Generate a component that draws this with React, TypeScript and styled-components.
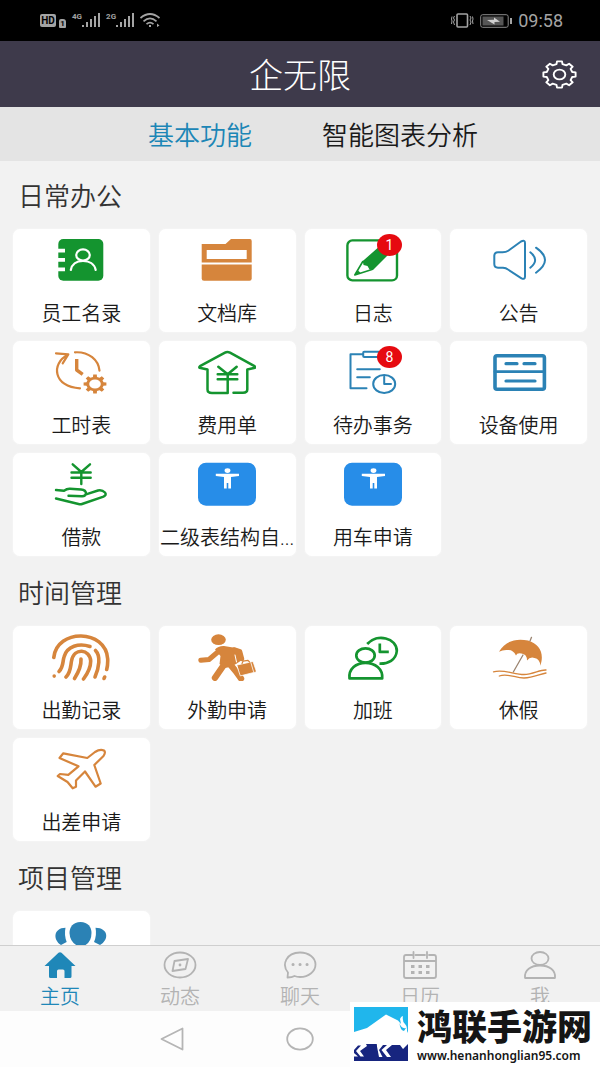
import React, { useState } from "react";
import styled, { createGlobalStyle } from "styled-components";

const GREEN = "#14942f";
const ORANGE = "#d6853c";
const BLUE = "#2b82b5";
const TILE_BLUE = "#278de8";

const GlobalStyle = createGlobalStyle`
  *, *::before, *::after { box-sizing: border-box; }
  body {
    margin: 0;
    background: #f2f2f2;
    font-family: Roboto, "Noto Sans CJK SC", sans-serif;
  }
  button {
    margin: 0;
    padding: 0;
    border: 0;
    background: none;
    color: inherit;
    font-family: inherit;
    cursor: pointer;
  }
  svg { display: block; }
`;

const Page = styled.div`
  position: relative;
  display: flex;
  flex-direction: column;
  height: 100vh;
  overflow: hidden;
`;

const StatusBar = styled.div`
  display: flex;
  flex: none;
  justify-content: space-between;
  align-items: center;
  height: 41px;
  padding: 0 37px 0 40px;
  background: #000;
  color: #a4a4a4;
`;

const StatusGroup = styled.div`
  display: flex;
  align-items: center;
  gap: 6px;
`;

const HdTag = styled.span`
  width: 16px;
  border-radius: 2px;
  background: #a4a4a4;
  color: #000;
  font-size: 10px;
  font-weight: 700;
  line-height: 13px;
  text-align: center;
`;

const SimTag = styled.span`
  align-self: flex-end;
  width: 7px;
  margin-left: -3px;
  border-radius: 2px 3px 1px 1px;
  background: #a4a4a4;
  color: #000;
  font-size: 8px;
  font-weight: 700;
  line-height: 9px;
  text-align: center;
`;

const Signal = styled.span`
  display: flex;
  align-items: flex-start;
  font-size: 8px;
  font-weight: 700;
  line-height: 8px;
`;

const Clock = styled.span`
  font-size: 18px;
  line-height: 20px;
`;

const Header = styled.header`
  display: grid;
  flex: none;
  grid-template-columns: 1fr auto 1fr;
  align-items: center;
  height: 66px;
  padding: 0 23px;
  background: #3e3a4b;
  color: #fff;
`;

const Title = styled.h1`
  grid-column: 2;
  margin: 0;
  padding-top: 4px;
  font-size: 34px;
  font-weight: 300;
  line-height: 40px;
`;

const SettingsButton = styled.button`
  justify-self: end;
`;

const Tabs = styled.nav`
  display: flex;
  flex: none;
  justify-content: center;
  height: 54px;
  background: #e4e4e4;
`;

const Tab = styled.button<{ $active: boolean }>`
  width: 33.333%;
  padding-top: 4px;
  color: ${(p) => (p.$active ? "#1c86b6" : "#1a1a1a")};
  font-size: 26px;
  font-weight: 350;
  line-height: 32px;
  white-space: nowrap;
`;

const Content = styled.main`
  flex: 1;
  min-height: 0;
  padding: 0 13px;
  overflow-y: auto;
  scrollbar-width: none;
`;

const Section = styled.section`
  padding-top: 19px;

  & + & { padding-top: 21px; }
`;

const SectionTitle = styled.h2`
  margin: 0;
  padding: 0 5px 15px;
  color: #333;
  font-size: 26px;
  font-weight: 350;
  line-height: 34px;
`;

const CardGrid = styled.div`
  display: grid;
  grid-template-columns: repeat(4, minmax(0, 1fr));
  gap: 9px;
`;

const Card = styled.button`
  display: flex;
  flex-direction: column;
  align-items: center;
  gap: 17px;
  height: 103px;
  padding-top: 7px;
  border-radius: 7px;
  background: #fff;
  box-shadow: 0 0 2px #fafafa;
`;

const IconBox = styled.span`
  position: relative;
  width: 58px;
  height: 48px;
`;

const Badge = styled.span`
  position: absolute;
  top: -2px;
  left: 33px;
  width: 25px;
  height: 22px;
  border-radius: 50%;
  background: #e60a10;
  color: #fff;
  font-size: 14px;
  line-height: 22px;
  text-align: center;
`;

const CardLabel = styled.span`
  color: #1a1a1a;
  font-size: 20px;
  font-weight: 350;
  line-height: 26px;
  white-space: nowrap;
`;

const BottomNav = styled.nav`
  display: flex;
  flex: none;
  height: 66px;
  border-top: 1px solid #cfcfcf;
  background: #f1f1f1;
`;

const NavItem = styled.button<{ $active: boolean }>`
  display: flex;
  flex: 1;
  flex-direction: column;
  align-items: center;
  gap: 6px;
  padding-top: 5px;
  color: ${(p) => (p.$active ? "#1f87b8" : "#b3b3b3")};
  font-size: 20px;
  font-weight: 350;
  line-height: 24px;
`;

const SystemNav = styled.div`
  display: grid;
  flex: none;
  grid-template-columns: repeat(3, 128px);
  justify-content: center;
  height: 56px;
  background: #fdfdfd;
`;

const SystemButton = styled.button`
  display: grid;
  place-items: center;
`;

const SiteMark = styled.a`
  position: absolute;
  right: 0;
  bottom: 0;
  display: flex;
  gap: 9px;
  width: 250px;
  height: 65px;
  padding: 5px 4px;
  background: #fff;
  color: #151515;
  text-decoration: none;
`;

const SiteText = styled.span`
  display: flex;
  flex-direction: column;
  padding-top: 2px;
`;

const SiteName = styled.strong`
  font-size: 35px;
  font-weight: 900;
  line-height: 40px;
  white-space: nowrap;
`;

const SiteUrl = styled.span`
  font-family: "Noto Sans", sans-serif;
  font-size: 12px;
  font-weight: 600;
  line-height: 14px;
`;

function gearPath(cx: number, cy: number, rx: number, ry: number, teeth: number, depth: number) {
  const points: string[] = [];
  const step = (Math.PI * 2) / teeth;
  for (let i = 0; i < teeth; i++) {
    const a = i * step - Math.PI / 2;
    const spots: [number, number][] = [
      [-0.3, depth],
      [-0.2, 1],
      [0.2, 1],
      [0.3, depth],
    ];
    spots.forEach(([offset, scale]) => {
      const t = a + offset * step;
      points.push(`${(cx + Math.cos(t) * rx * scale).toFixed(1)} ${(cy + Math.sin(t) * ry * scale).toFixed(1)}`);
    });
  }
  return `M${points.join("L")}Z`;
}

function Drawing({ color, width = 2.4, children }: { color: string; width?: number; children: React.ReactNode }) {
  return (
    <svg
      width="58"
      height="48"
      viewBox="0 0 58 48"
      fill="none"
      stroke={color}
      strokeWidth={width}
      strokeLinecap="round"
      strokeLinejoin="round"
      aria-hidden="true"
    >
      {children}
    </svg>
  );
}

const PersonTile = () => (
  <Drawing color="none">
    <rect x="0" y="2.7" width="58" height="43" rx="8" fill={TILE_BLUE} />
    <ellipse cx="29.5" cy="10.6" rx="2.9" ry="2.3" fill="#fff" />
    <path d="M17.8 13.8H41V15.9L33 17V28.5H30.3V23H28.7V28.5H26V17L17.8 15.9Z" fill="#fff" />
  </Drawing>
);

const icons: Record<string, React.ReactNode> = {
  contacts: (
    <Drawing color="#fff" width={2.2}>
      <rect x="6.3" y="3" width="45" height="41.7" rx="5" fill={GREEN} stroke="none" />
      <path d="M5 12.8H13V16.4H5ZM5 22H13V25.8H5ZM5 31.6H13V35.3H5Z" fill="#fff" stroke="none" />
      <ellipse cx="31" cy="19" rx="6.8" ry="5.6" />
      <path d="M18.8 34C20 28 25 25 31 25S42.5 28 43.7 34" />
    </Drawing>
  ),
  folder: (
    <Drawing color="none">
      <path d="M3.7 8H27.5L33 3H52Q53.7 3 53.7 5V26.4H3.7Z" fill={ORANGE} />
      <path d="M3.7 28.4H53.7V42.5Q53.7 44.7 51.5 44.7H6Q3.7 44.7 3.7 42.5Z" fill={ORANGE} />
      <path d="M8.7 14H48.7V23H8.7Z" fill="#fff" />
    </Drawing>
  ),
  diary: (
    <Drawing color={GREEN}>
      <rect x="3.4" y="4.4" width="49.6" height="40" rx="5" />
      <path d="M18.8 25L37 9L47 16L29 34L25.5 33.5L23.5 30L19.5 29Z" fill={GREEN} stroke="none" />
      <path d="M18.8 25.5L10.8 39L28 33.5" strokeWidth="1.6" />
      <path d="M10.8 39L14 34.5L16.5 36.8Z" fill={GREEN} stroke="none" />
    </Drawing>
  ),
  speaker: (
    <Drawing color={BLUE} width={2}>
      <path d="M4.3 20Q4.3 16.3 8 16.3H12.5Q16 16.3 18.3 14.7L31 5.5Q35 3.5 35 7V40.5Q35 44 31.5 42.3L18 33.5Q16 32 13 31.800H8Q4.3 31.5 4.3 28Z" />
      <path d="M40.3 16.3Q50 24 40.3 31.7M46 11.7Q64 24 46 36.7" />
    </Drawing>
  ),
  timesheet: (
    <Drawing color={ORANGE} width={2.2}>
      <path d="M4 5.3L16.3 6.3L10.7 15.3M15.7 7C-1 15 1 39 28 40.3M23 4.3C37 3.5 46.5 12 47.5 22.7" />
      <path d="M24.7 11V22L30.7 26.3" strokeWidth="3.4" strokeLinecap="butt" />
      <path d={gearPath(43, 36, 11.5, 9.5, 8, 0.76)} fill={ORANGE} stroke="none" />
      <ellipse cx="43" cy="36" rx="5.8" ry="4.6" fill="#fff" stroke="none" />
    </Drawing>
  ),
  expense: (
    <Drawing color={GREEN} width={2.5}>
      <path d="M29.7 26.3V45H14Q9.5 45 9.5 41.5V21.5L1.5 19.8Q1 19 2 18.2L27 4.7Q29.3 3.5 32 4.7L56.500 18.2Q57.5 19 57 19.8L49.3 21.5V41.5Q49.3 44.7 45 44.7H35.5" />
      <path d="M20.3 18.7L29.7 26.3L38.7 18.7M19.7 26.3H39.3M19.7 31.3H39.3" />
    </Drawing>
  ),
  todo: (
    <Drawing color={BLUE} width={2}>
      <path d="M19 6.3H6.5V40.3H22.5" />
      <rect x="19.2" y="3.7" width="17" height="5.3" rx="1" />
      <path d="M13.2 21.3H35.8M13.2 29.3H25.8" />
      <ellipse cx="40.2" cy="36" rx="11" ry="9" />
      <path d="M40.2 28.8V36H47" />
    </Drawing>
  ),
  device: (
    <Drawing color={BLUE} width={3.6}>
      <rect x="5" y="7.8" width="49.4" height="33.4" rx="2" />
      <path d="M5 23.7H54" strokeWidth="2.8" />
      <path d="M16 15.7H27M34 15.7H45M16 33H45" strokeWidth="3.2" />
    </Drawing>
  ),
  loan: (
    <Drawing color={GREEN}>
      <path d="M20.7 4.3L29.3 12L38 4.3M29.3 12V24M19.5 12.5H38.7M19.5 17.7H38.7" />
      <path d="M4 30L12 30.8Q15 28.5 18 28.7L29 29.5Q34 30 34 33.5Q33.5 36.3 30 36.2L16.5 35.7M34 34.3L46 30.5Q50 29.5 53 32.5Q55 35 51.5 36.6L30 44Q28.5 44.5 26.5 44L4 38.5" />
    </Drawing>
  ),
  tile: <PersonTile />,
  fingerprint: (
    <Drawing color={ORANGE} width={3.6}>
      <path d="M1.800 24.5C4.5 -4.5 54 -4.5 55.7 26Q55.9 32 54.7 36.5" />
      <path d="M7 38.5C11.5 34 10.5 29 12 24C15 13 27 10 38 13.5" />
      <path d="M43.5 17.5C49 23 47 35 43 44" />
      <path d="M14 44C19 39 18.5 33 19.5 28C22 14 38 16 38.7 28C38.7 35 36 40 31.5 46" />
      <path d="M29 26C29.5 34 26 40 22.5 45.5M2.2 43V43.1M52.7 44L52 45.5" />
    </Drawing>
  ),
  runner: (
    <Drawing color={ORANGE} width={5}>
      <ellipse cx="20.5" cy="6.7" rx="7.3" ry="5.4" fill={ORANGE} stroke="none" />
      <path d="M2.8 27.3L11 26.5L21 18" />
      <path d="M17 16.5Q20 12.800 26 13L38 15L43.5 18L45.5 26L38 31L32 34L27 35L21.500 31L22.5 23Z" fill={ORANGE} stroke="none" />
      <path d="M36 16.5L42 18.5L44 26" strokeWidth="4.600" />
      <path d="M26.500 31L17 44.8M31 30L38 38.5L43 45.5" strokeWidth="6.400" />
      <path d="M37 22L38.500 29" stroke="#fff" strokeWidth="1" />
      <path d="M39 32L55 28.500L58.500 38.800L42.700 42.800Z" fill={ORANGE} stroke="#fff" strokeWidth=".8" />
      <path d="M44 30.500L45 28.200L50 27.300L51.500 29" strokeWidth="1.200" />
      <path d="M53 30L55.500 38.500" stroke="#fff" strokeWidth=".8" />
    </Drawing>
  ),
  overtime: (
    <Drawing color={GREEN} width={2.7}>
      <path d="M23.2 11C33 0 53 5 52.8 18C52 27 44 31 35.500 30.7" strokeLinecap="butt" />
      <path d="M35.800 10.5V18.9H44.800" strokeLinecap="butt" />
      <ellipse cx="21.5" cy="22.500" rx="9.200" ry="7.200" />
      <path d="M5.500 45.300C4.500 36 12 29.800 21.500 29.800S39 36 38.200 45.300Z" />
    </Drawing>
  ),
  umbrella: (
    <Drawing color={ORANGE} width={1.3}>
      <path d="M9 18.700C15 8 26 5 38 7.500C50 11 54.500 21 50.300 32.700Q50 26 44.500 25Q40 23.500 37 27.500Q37 21 31.500 20.500Q27 19.500 26 22.500Q23 16.500 18 17Q13 16.500 9 18.700Z" fill={ORANGE} stroke="none" />
      <path d="M41.500 4.300L40 8M33 22L23.300 39" stroke="#9b8470" />
      <path d="M3.500 38.800C14 36 24 41.500 34 41.500C43 41.500 50 36.500 56 37M9.300 43C18 40 25 45 34 45C43 45 50 41 56 40" />
    </Drawing>
  ),
  plane: (
    <Drawing color={ORANGE} width={2.2}>
      <path d="M7.500 13L11.300 8.300L35.300 13L43 7Q48 3.800 52 5.500Q54 7 51.500 11L42.300 20L48.700 38.500L43.500 41.700L33 26.500L24 35.500V41.700L20.700 43.300L15.500 37L5.700 31L8 29L16.300 29.800L26.500 21.300Z" />
    </Drawing>
  ),
  people: (
    <Drawing color="none">
      <path d="M28.500 4C36 4 39.500 9 39.500 15Q39.500 26 29 29Q18 26 17.500 15C17.500 9 21 4 28.500 4Z" fill={BLUE} />
      <path d="M13.500 9.700C1 10 1 22 9 27L14.700 24Q12 17 13.500 9.700Z" fill={BLUE} />
      <path d="M43.500 9.700C57 10 57 22 48 27L42 24Q45 17 43.500 9.700Z" fill={BLUE} />
    </Drawing>
  ),
};

interface Entry {
  icon: string;
  label?: string;
  badge?: number;
}

const sections: { title: string; entries: Entry[] }[] = [
  {
    title: "日常办公",
    entries: [
      { icon: "contacts", label: "员工名录" },
      { icon: "folder", label: "文档库" },
      { icon: "diary", label: "日志", badge: 1 },
      { icon: "speaker", label: "公告" },
      { icon: "timesheet", label: "工时表" },
      { icon: "expense", label: "费用单" },
      { icon: "todo", label: "待办事务", badge: 8 },
      { icon: "device", label: "设备使用" },
      { icon: "loan", label: "借款" },
      { icon: "tile", label: "二级表结构自..." },
      { icon: "tile", label: "用车申请" },
    ],
  },
  {
    title: "时间管理",
    entries: [
      { icon: "fingerprint", label: "出勤记录" },
      { icon: "runner", label: "外勤申请" },
      { icon: "overtime", label: "加班" },
      { icon: "umbrella", label: "休假" },
      { icon: "plane", label: "出差申请" },
    ],
  },
  { title: "项目管理", entries: [{ icon: "people" }] },
];

function NavIcon({ children }: { children: React.ReactNode }) {
  return (
    <svg width="34" height="28" viewBox="0 0 34 28" fill="none" stroke="currentColor" strokeWidth="1.8" strokeLinejoin="round" strokeLinecap="round" aria-hidden="true">
      {children}
    </svg>
  );
}

const navItems = [
  {
    label: "主页",
    icon: (
      <path d="M1.500 15L15.500 1.700Q17 .7 18.500 1.700L32.500 15H28.500V25.500Q28.500 27 27 27H21.500V20Q21.500 18.500 20 18.500H15.500Q14 18.500 14 20V27H7.500Q6 27 6 25.500V15Z" fill="currentColor" stroke="none" />
    ),
  },
  {
    label: "动态",
    icon: (
      <>
        <ellipse cx="17" cy="14" rx="15.500" ry="12.500" />
        <path d="M11.500 10L25 8L22.500 18L9.500 20Z" />
        <circle cx="17" cy="14" r="1.400" fill="currentColor" stroke="none" />
      </>
    ),
  },
  {
    label: "聊天",
    icon: (
      <>
        <path d="M4.500 26.500L5 21.500C-1.500 14 3 1.500 17 1.500C26 1.500 32.500 7 32.500 13.500S26 26 17 26Q14 26 11.500 25Q9 26.500 4.500 26.500Z" />
        <path d="M10 13.500H10.100M17 13.500H17.100M24 13.500H24.100" strokeWidth="3" />
      </>
    ),
  },
  {
    label: "日历",
    icon: (
      <>
        <path d="M9 4H3Q1 4 1 6V25Q1 27 3 27H31Q33 27 33 25V6Q33 4 31 4H26M12.500 4H22M1 10H33M10.500 1V7M24 1V7" />
        <path d="M8 15.500H11.500M15.500 15.500H19M23 15.500H26.500M8 21.500H11.500M15.500 21.500H19M23 21.500H26.500" strokeWidth="3" strokeLinecap="butt" />
      </>
    ),
  },
  {
    label: "我",
    icon: (
      <>
        <ellipse cx="17" cy="7.500" rx="8.500" ry="6.500" />
        <path d="M2 27C1 19 8 14.500 17 14.500S33 19 32 27Z" />
      </>
    ),
  },
];

const SignalBars = () => (
  <svg width="18" height="15" viewBox="0 0 18 15" fill="#a4a4a4" aria-hidden="true">
    <path d="M0 12h2v2H0zM4 9h2v5H4zM8 6h2v8H8zM12 3h2v11h-2zM16 0h2v14h-2z" />
  </svg>
);

export default function App() {
  const [tab, setTab] = useState("基本功能");
  const [page, setPage] = useState("主页");

  return (
    <>
      <GlobalStyle />
      <Page>
        <StatusBar>
          <StatusGroup>
            <HdTag>HD</HdTag>
            <SimTag>1</SimTag>
            <Signal>4G<SignalBars /></Signal>
            <Signal>2G<SignalBars /></Signal>
            <svg width="21" height="15" viewBox="0 0 21 15" fill="none" stroke="#a4a4a4" strokeWidth="1.7" aria-hidden="true">
              <path d="M.5 5Q10 -3 19.500 5M3.500 8.300Q10 2.500 16.500 8.300M6.500 11.200Q10 8 13.500 11.200" />
              <path d="M9 12h2v2H9zM17 10.500l2.500 2L17 14z" fill="#a4a4a4" stroke="none" />
            </svg>
          </StatusGroup>
          <StatusGroup>
            <svg width="23" height="15" viewBox="0 0 23 15" fill="none" stroke="#a4a4a4" aria-hidden="true">
              <rect x="6" y="1" width="10.500" height="13" rx="1" strokeWidth="1.600" />
              <path d="M3.500 3L2.500 5L3.500 7L2.500 9L3.500 12M1 3.500L.5 6L1 8L.5 11M19 3L20 5L19 7L20 9L19 12M21.500 3.500L22 6L21.500 8L22 11" />
            </svg>
            <svg width="32" height="14" viewBox="0 0 32 14" fill="none" aria-hidden="true">
              <rect x=".7" y=".7" width="27.500" height="12.600" rx="2" stroke="#8a8a8a" />
              <rect x="2.500" y="2.500" width="21" height="9" fill="#555" />
              <path d="M7 6L14 5.800V3.500L20 7.700L14.500 8V10.500Z" fill="#d0d0d0" />
              <path d="M30 4h2v6h-2z" fill="#a4a4a4" />
            </svg>
            <Clock>09:58</Clock>
          </StatusGroup>
        </StatusBar>

        <Header>
          <Title>企无限</Title>
          <SettingsButton aria-label="设置">
            <svg width="35" height="29" viewBox="0 0 35 29" fill="none" stroke="#fff" strokeWidth="1.900" strokeLinejoin="round" aria-hidden="true">
              <path d={gearPath(17.5, 14.5, 16.3, 13.3, 8, 0.8)} />
              <ellipse cx="17.500" cy="14.500" rx="5.800" ry="4.900" />
            </svg>
          </SettingsButton>
        </Header>

        <Tabs>
          {["基本功能", "智能图表分析"].map((name) => (
            <Tab key={name} $active={tab === name} onClick={() => setTab(name)}>
              {name}
            </Tab>
          ))}
        </Tabs>

        <Content>
          {sections.map((section) => (
            <Section key={section.title}>
              <SectionTitle>{section.title}</SectionTitle>
              <CardGrid>
                {section.entries.map((entry, i) => (
                  <Card key={i} aria-label={entry.label ?? section.title}>
                    <IconBox>
                      {icons[entry.icon]}
                      {entry.badge && <Badge>{entry.badge}</Badge>}
                    </IconBox>
                    {entry.label && <CardLabel>{entry.label}</CardLabel>}
                  </Card>
                ))}
              </CardGrid>
            </Section>
          ))}
        </Content>

        <BottomNav>
          {navItems.map((item) => (
            <NavItem key={item.label} $active={page === item.label} onClick={() => setPage(item.label)}>
              <NavIcon>{item.icon}</NavIcon>
              {item.label}
            </NavItem>
          ))}
        </BottomNav>

        <SystemNav>
          <SystemButton aria-label="返回">
            <svg width="24" height="24" viewBox="0 0 24 24" fill="none" stroke="#b5b5b5" strokeWidth="1.800" strokeLinejoin="round" aria-hidden="true">
              <path d="M1.500 12L22.500 1.500V22.500Z" />
            </svg>
          </SystemButton>
          <SystemButton aria-label="主屏幕">
            <svg width="28" height="24" viewBox="0 0 28 24" fill="none" stroke="#b5b5b5" strokeWidth="1.800" aria-hidden="true">
              <ellipse cx="14" cy="12" rx="12.800" ry="10.600" />
            </svg>
          </SystemButton>
        </SystemNav>

        <SiteMark href="#">
          <svg width="54" height="54" viewBox="0 0 54 54" aria-hidden="true">
            <path d="M0 0H54V37H0Z" fill="#20b6ec" />
            <path d="M0 37H54V54H0Z" fill="#17257f" />
            <path
              d="M0 25L13 21L32 7.500L44 13.500L47 17L46 12Q46.500 10 49 9Q48 14 51 17Q53.500 19 53 24L54 26V37L52 39L49 42L46 38H38L32 43L37 50H33L27.500 43L33 38H29L25 43L28.500 50H25L22.500 37H12L13 39L6 44L10 49.500H6.500L2 44L7 38.500H4L0 43Z"
              fill="#fff"
            />
            <path d="M13 37H22.500L23 42L21 38.500L13 39Z" fill="#17257f" />
            <path d="M0 46L4 49.500H0Z" fill="#fff" />
            <path d="M45.500 16Q47 22 52 21L50 24Q46 23 45.500 16Z" fill="#20b6ec" />
          </svg>
          <SiteText>
            <SiteName>鸿联手游网</SiteName>
            <SiteUrl>www.henanhonglian95.com</SiteUrl>
          </SiteText>
        </SiteMark>
      </Page>
    </>
  );
}
